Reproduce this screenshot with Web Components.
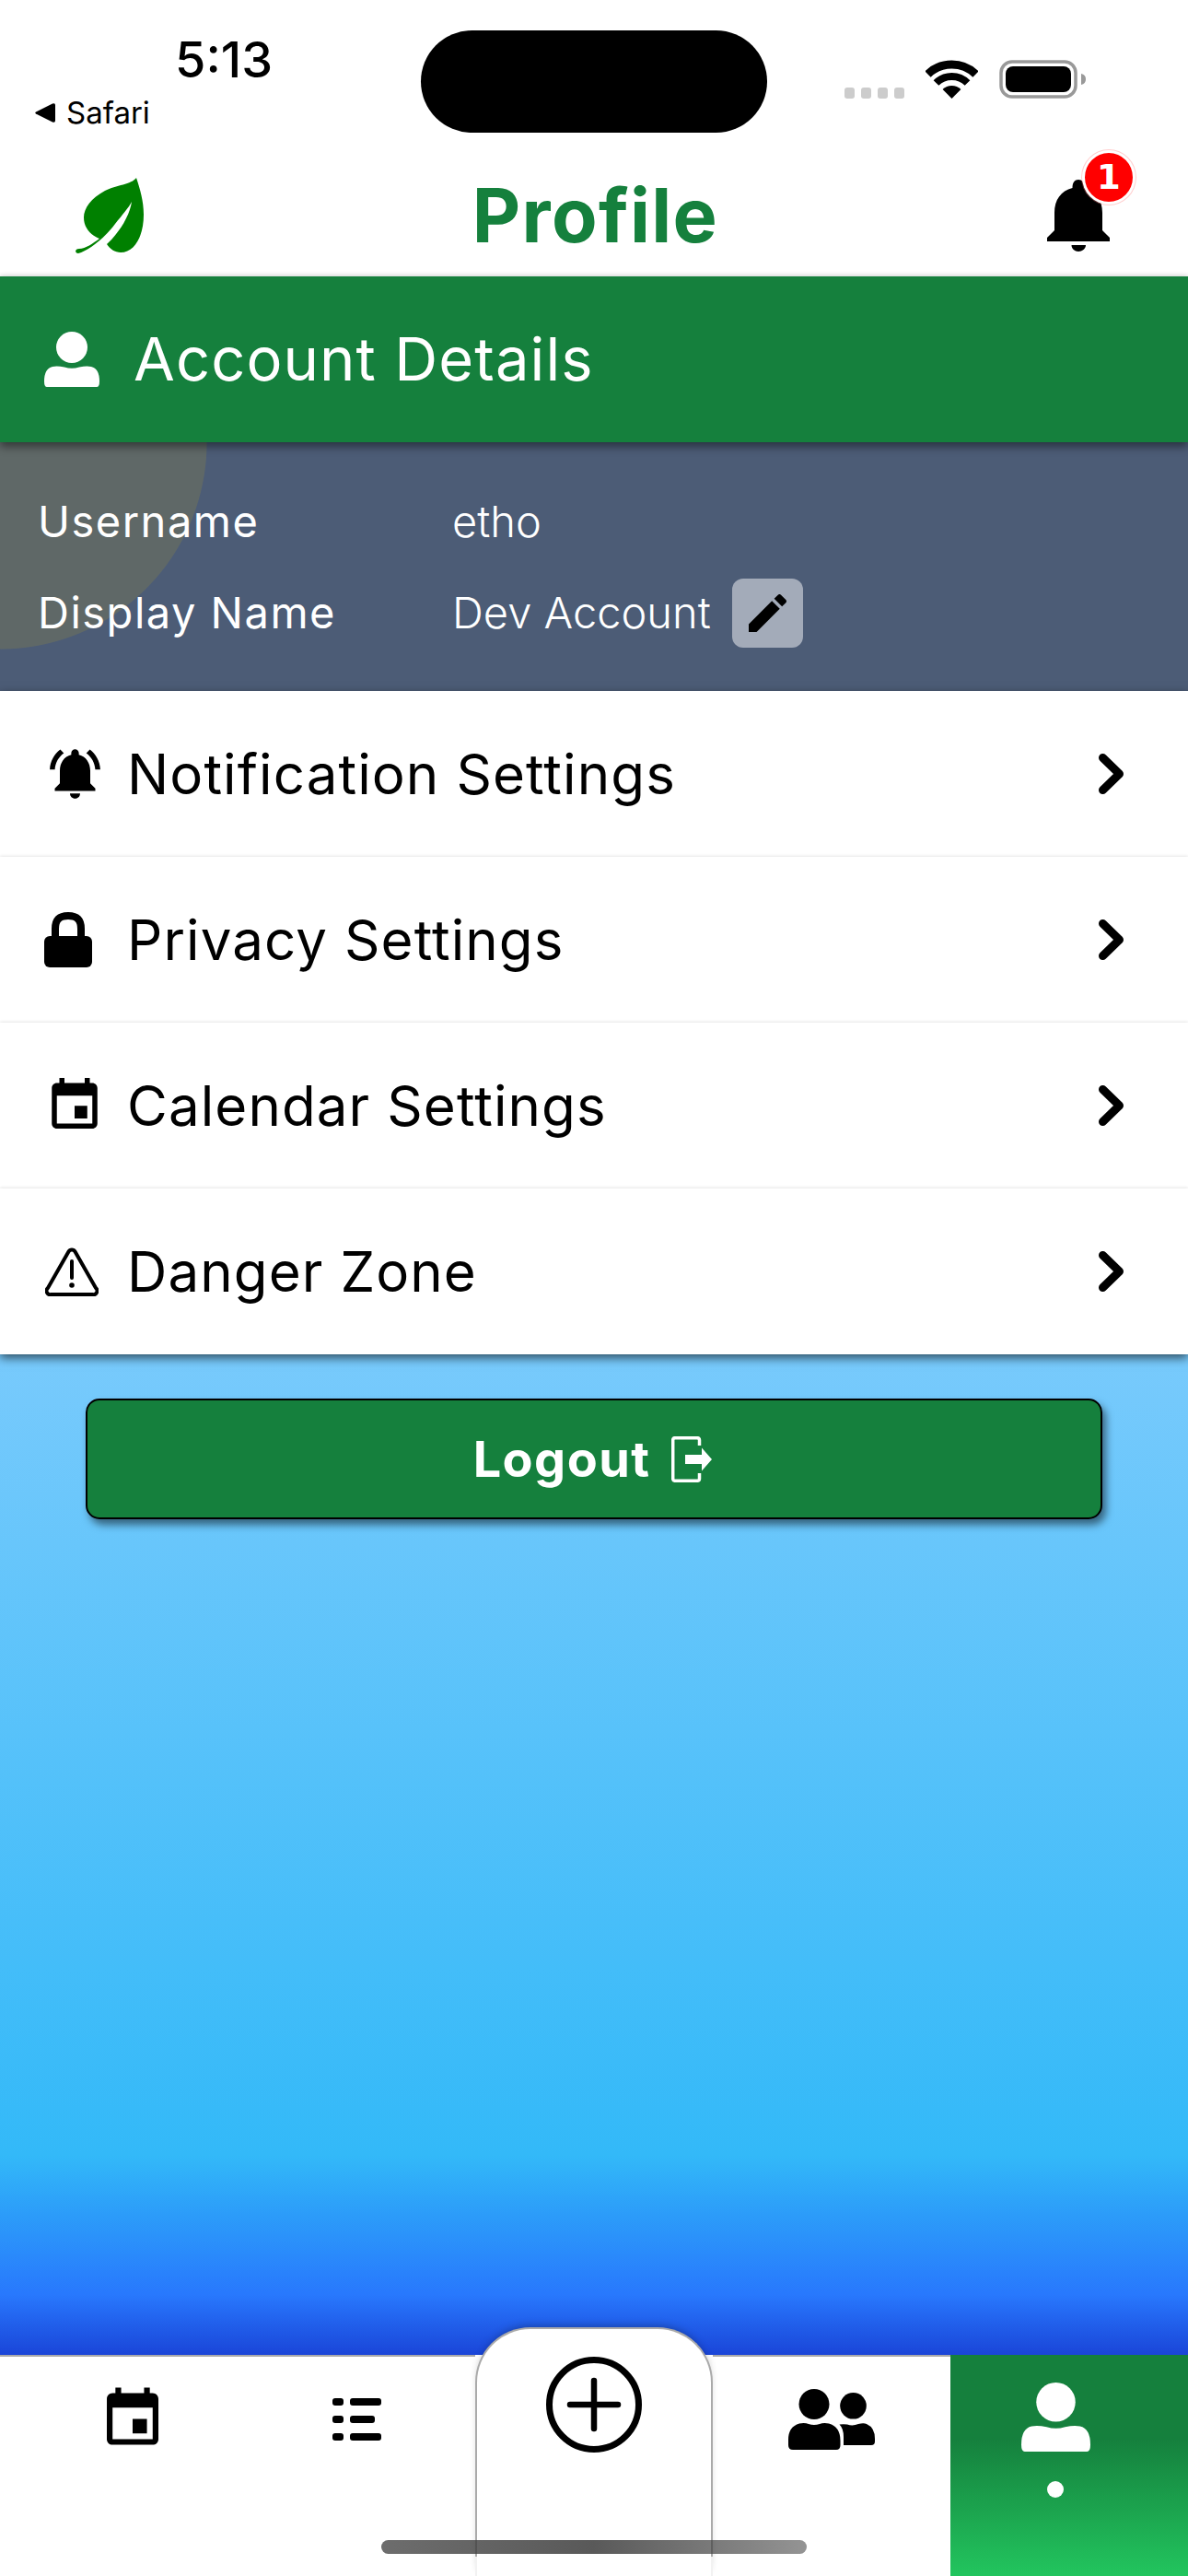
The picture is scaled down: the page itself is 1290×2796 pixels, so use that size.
<!DOCTYPE html>
<html>
<head>
<meta charset="utf-8">
<style>
  html, body { margin: 0; padding: 0; background: #fff; }
  body { font-family: Inter, "Liberation Sans", sans-serif; }
</style>
</head>
<body>
<app-page>
  <status-bar slot="top"></status-bar>
  <top-nav slot="top" heading="Profile" count="1"></top-nav>
  <section-bar slot="top" label="Account Details"></section-bar>
  <account-info slot="top">
    <info-row label="Username" value="etho"></info-row>
    <info-row label="Display Name" value="Dev Account" editable></info-row>
  </account-info>
  <settings-list slot="top">
    <settings-row label="Notification Settings">
      <svg slot="icon" style="margin-left:54px" width="55" height="54" viewBox="2 2.5 20 19.5"><path d="M7.58 4.08L6.15 2.65C3.75 4.48 2.17 7.3 2.03 10.5h2c.15-2.65 1.51-4.97 3.55-6.42zm12.39 6.42h2c-.15-3.2-1.73-6.02-4.12-7.85l-1.42 1.43c2.02 1.45 3.39 3.77 3.54 6.42zM18 11c0-3.07-1.64-5.64-4.5-6.32V4c0-.83-.67-1.5-1.5-1.5s-1.5.67-1.5 1.5v.68C7.63 5.36 6 7.92 6 11v5l-2 2v1h16v-1l-2-2v-5zm-6 11c.14 0 .27-.01.4-.04.65-.14 1.18-.58 1.44-1.18.1-.24.15-.5.15-.78h-4c.01 1.1.9 2 2.01 2z"/></svg>
    </settings-row>
    <settings-row label="Privacy Settings">
      <svg slot="icon" style="margin-left:48px" width="52" height="60" viewBox="0 0 52 60"><rect y="26" width="52" height="34" rx="6"/><path d="M12 28V18C12 7 18 4 26 4s14 3 14 14v10" fill="none" stroke="#000" stroke-width="8"/></svg>
    </settings-row>
    <settings-row label="Calendar Settings">
      <svg slot="icon" style="margin-left:56px;margin-top:-5px" width="50" height="55" viewBox="3 1 18 20"><path d="M17 12h-5v5h5v-5zM16 1v2H8V1H6v2H5c-1.11 0-1.99.9-1.99 2L3 19c0 1.1.89 2 2 2h14c1.1 0 2-.9 2-2V5c0-1.1-.9-2-2-2h-1V1h-2zm3 18H5V8h14v11z"/></svg>
    </settings-row>
    <settings-row label="Danger Zone">
      <svg slot="icon" style="margin-left:49px" width="58" height="53" viewBox="0 0 58 53"><path d="M25.5 4.5a4 4 0 0 1 7 0L55 44a4 4 0 0 1-3.5 7H6.5A4 4 0 0 1 3 44Z" fill="none" stroke="#000" stroke-width="4"/><path d="M29 15V33" stroke="#000" stroke-width="4" stroke-linecap="round"/><circle cx="29" cy="41" r="2.8"/></svg>
    </settings-row>
  </settings-list>
  <logout-button>Logout</logout-button>
  <tab-bar slot="bottom"></tab-bar>
</app-page>

<script>
// page shell: top blocks, gradient area, tab bar
const pageTpl = document.createElement('template');
pageTpl.innerHTML = `
  <style>
    :host { display: flex; flex-direction: column; width: 1290px; height: 2796px; overflow: hidden; position: relative; }
    main {
      flex: 1;
      padding-top: 48px;
      background: linear-gradient(to bottom, #78cafc 0%, #33b9f8 80%, #2c9cf9 86%, #2878fd 94%, #1a45d8 100%);
    }
    .top { display: block; position: relative; z-index: 1; }
  </style>
  <div class="top"><slot name="top"></slot></div>
  <main><slot></slot></main>
  <slot name="bottom"></slot>
`;
class AppPage extends HTMLElement {
  constructor() {
    super();
    this.attachShadow({ mode: 'open' });
    this.shadowRoot.appendChild(pageTpl.content.cloneNode(true));
  }
}
customElements.define('app-page', AppPage);

// fake iOS status bar
const statusTpl = document.createElement('template');
statusTpl.innerHTML = `
  <style>
    :host { display: flex; height: 165px; background: #fff; color: #000; font-family: Inter, sans-serif; }
    .left { width: 457px; }
    .time { margin: 35px 0 0 190px; font-size: 54px; line-height: 60px; font-weight: 500; }
    .back { margin: 7px 0 0 38px; display: flex; align-items: center; gap: 12px; font-size: 33px; line-height: 40px; }
    .island { width: 376px; height: 111px; margin-top: 33px; border-radius: 56px; background: #000; }
    .right { display: flex; align-items: flex-end; height: 42px; margin: 65px 0 0 84px; }
    .dots { display: flex; gap: 7px; margin-right: 23px; }
    .dots i { width: 11px; height: 12px; border-radius: 3px; background: #ccc; }
    .wifi { margin-right: 23px; }
  </style>
  <div class="left">
    <div class="time">5:13</div>
    <div class="back">
      <svg width="22" height="21" viewBox="0 0 22 21"><path d="M1 9.5 19 .5Q22-.5 22 2V19q0 2.500-3 1.500L1 11.500Q-.5 10.500 1 9.500Z"/></svg>
      <span>Safari</span>
    </div>
  </div>
  <div class="island"></div>
  <div class="right">
    <div class="dots"><i></i><i></i><i></i><i></i></div>
    <svg class="wifi" width="57" height="42" viewBox="0 0 57 42">
      <path d="M2.500 15.500A37.500 37.500 0 0 1 54.500 15.500" fill="none" stroke="#000" stroke-width="9"/>
      <path d="M11.500 25A24 24 0 0 1 45.500 25" fill="none" stroke="#000" stroke-width="8"/>
      <path d="M28.500 42 18.600 32.100A14 14 0 0 1 38.400 32.100Z"/>
    </svg>
    <svg width="94" height="42" viewBox="0 0 94 42">
      <rect x="2" y="2" width="81" height="38" rx="12" fill="none" stroke="#999" stroke-width="3.500"/>
      <rect x="7" y="7" width="71" height="28" rx="8"/>
      <path d="M89 15q5 1 5 6t-5 6Z" fill="#999"/>
    </svg>
  </div>
`;
class StatusBar extends HTMLElement {
  constructor() {
    super();
    this.attachShadow({ mode: 'open' });
    this.shadowRoot.appendChild(statusTpl.content.cloneNode(true));
  }
}
customElements.define('status-bar', StatusBar);

// logo, page title, notification bell
const navTpl = document.createElement('template');
navTpl.innerHTML = `
  <style>
    :host { display: flex; align-items: center; justify-content: space-between; box-sizing: border-box; height: 135px; padding: 3px 85px 0 81px; background: #fff; }
    h1 { margin: 0; font: 700 81px/96px Inter, sans-serif; letter-spacing: 1.3px; color: #15803d; }
    .bell { position: relative; width: 68px; height: 78px; }
    .badge {
      position: absolute; left: 38px; top: -32px;
      box-sizing: border-box; width: 58px; height: 59px;
      display: flex; align-items: center; justify-content: center;
      border: 3px solid #fff; border-radius: 50%;
      box-shadow: 0 0 0 1px rgba(255,120,120,.35);
      background: #f00; color: #fff;
      font: 700 37px/1 "DejaVu Sans", sans-serif;
    }
    svg { display: block; }
  </style>
  <svg width="75" height="83" viewBox="0 0 75 83"><path fill="#008000" d="M67 0C62 7 45 8 33 14 18 22 10 33 10 43c0 11 7 19 17 23C20 71 12 77 5 77 0 77 0 82 4 82 15 79 32 66 44 50 52 40 59 32 62 26 60 40 50 58 35 72c3 5 9 9 15 9C66 81 75 62 75 40 75 25 71 12 67 0Z"/></svg>
  <h1></h1>
  <div class="bell">
    <svg width="68" height="78" viewBox="0 0 68 78"><path d="M34 0C30 0 27.500 3 27.500 9 15 12 8 22 8 36V55L0 63V67H68V63L60 55V36C60 22 53 12 40.500 9 40.500 3 38 0 34 0Z"/><path d="M26.500 71H42C42 75 38 78 34 78S26.500 75 26.500 71Z"/></svg>
    <span class="badge"></span>
  </div>
`;
class TopNav extends HTMLElement {
  constructor() {
    super();
    this.attachShadow({ mode: 'open' });
    this.shadowRoot.appendChild(navTpl.content.cloneNode(true));
    this.shadowRoot.querySelector('h1').textContent = this.getAttribute('heading');
    this.shadowRoot.querySelector('.badge').textContent = this.getAttribute('count');
  }
}
customElements.define('top-nav', TopNav);

// green section header
const sectionTpl = document.createElement('template');
sectionTpl.innerHTML = `
  <style>
    :host {
      display: flex; align-items: center; gap: 37px; position: relative; z-index: 2;
      box-sizing: border-box; height: 180px; padding-left: 48px;
      background: #15803d; color: #fff;
      box-shadow: 0 5px 9px rgba(0,0,0,.45), 0 -2px 4px rgba(0,0,0,.08);
      font: 400 65px/80px Inter, sans-serif;
      letter-spacing: 1.1px;
    }
  </style>
  <svg width="60" height="60" viewBox="0 0 60 60" fill="#fff"><circle cx="30" cy="17" r="17"/><path d="M9 38Q14 37 22 38.500 30 41 38 38.500 46 37 51 38 60 40 60 54 60 60 57 60H3Q0 60 0 54 0 40 9 38Z"/></svg>
  <span></span>
`;
class SectionBar extends HTMLElement {
  constructor() {
    super();
    this.attachShadow({ mode: 'open' });
    this.shadowRoot.appendChild(sectionTpl.content.cloneNode(true));
    this.shadowRoot.querySelector('span').textContent = this.getAttribute('label');
  }
}
customElements.define('section-bar', SectionBar);

// slate panel with the quarter circle in its corner
const infoTpl = document.createElement('template');
infoTpl.innerHTML = `
  <style>
    :host {
      display: flex; flex-direction: column; gap: 23px;
      box-sizing: border-box; height: 270px; padding: 48px 0 0 41px;
      background: radial-gradient(circle 225px at 0 0, #5f6867 99.6%, rgba(95,104,103,0) 100%), #4c5c76;
    }
  </style>
  <slot></slot>
`;
class AccountInfo extends HTMLElement {
  constructor() {
    super();
    this.attachShadow({ mode: 'open' });
    this.shadowRoot.appendChild(infoTpl.content.cloneNode(true));
  }
}
customElements.define('account-info', AccountInfo);

const infoRowTpl = document.createElement('template');
infoRowTpl.innerHTML = `
  <style>
    :host { display: grid; grid-template-columns: 450px 1fr; align-items: center; height: 76px; color: #fff; font: 400 47px/56px Inter, sans-serif; }
    .label { letter-spacing: 1.5px; }
    .text { font-weight: 300; }
    .value { display: flex; align-items: center; gap: 23px; }
    button { box-sizing: border-box; width: 77px; height: 75px; padding: 0; display: flex; align-items: center; justify-content: center; border: 0; border-radius: 12px; background: #a3abb9; }
    button[hidden] { display: none; }
  </style>
  <span class="label"></span>
  <div class="value">
    <span class="text"></span>
    <button hidden><svg width="41" height="41" viewBox="3 3 18 18"><path d="M3 17.250V21h3.750L17.810 9.940l-3.750-3.750L3 17.250zM20.710 7.040c.39-.39.39-1.020 0-1.410l-2.340-2.340c-.39-.39-1.020-.39-1.410 0l-1.830 1.830 3.750 3.750 1.830-1.830z"/></svg></button>
  </div>
`;
class InfoRow extends HTMLElement {
  constructor() {
    super();
    this.attachShadow({ mode: 'open' });
    this.shadowRoot.appendChild(infoRowTpl.content.cloneNode(true));
    this.shadowRoot.querySelector('.label').textContent = this.getAttribute('label');
    this.shadowRoot.querySelector('.text').textContent = this.getAttribute('value');
    this.shadowRoot.querySelector('button').hidden = !this.hasAttribute('editable');
  }
}
customElements.define('info-row', InfoRow);

const listTpl = document.createElement('template');
listTpl.innerHTML = `
  <style>
    :host { display: block; background: #fff; box-shadow: 0 4px 10px rgba(0,0,0,.6); }
  </style>
  <slot></slot>
`;
class SettingsList extends HTMLElement {
  constructor() {
    super();
    this.attachShadow({ mode: 'open' });
    this.shadowRoot.appendChild(listTpl.content.cloneNode(true));
  }
}
customElements.define('settings-list', SettingsList);

const rowTpl = document.createElement('template');
rowTpl.innerHTML = `
  <style>
    :host {
      display: grid; grid-template-columns: 138px 1fr 27px; align-items: center; position: relative;
      box-sizing: border-box; height: 180px; padding-right: 70px;
      background: #fff; color: #000;
      font: 400 60px/72px Inter, sans-serif;
      letter-spacing: 1.1px;
    }
    :host(:not(:first-child)) { box-shadow: 0 -1px 3px rgba(0,0,0,.1); }
    ::slotted(svg) { display: block; }
  </style>
  <slot name="icon"></slot>
  <span></span>
  <svg width="27" height="44" viewBox="0 0 27 44"><path d="M4.500 4.500 22.500 22 4.500 39.500" fill="none" stroke="#000" stroke-width="9" stroke-linecap="round" stroke-linejoin="round"/></svg>
`;
class SettingsRow extends HTMLElement {
  constructor() {
    super();
    this.attachShadow({ mode: 'open' });
    this.shadowRoot.appendChild(rowTpl.content.cloneNode(true));
    this.shadowRoot.querySelector('span').textContent = this.getAttribute('label');
  }
}
customElements.define('settings-row', SettingsRow);

const logoutTpl = document.createElement('template');
logoutTpl.innerHTML = `
  <style>
    :host { display: block; margin: 0 93px; }
    button {
      display: flex; align-items: center; justify-content: center; gap: 23px;
      box-sizing: border-box; width: 100%; height: 131px; padding: 0 3px 0 0;
      border: 2px solid #000; border-radius: 15px;
      background: #15803d; color: #fff;
      box-shadow: 4px 6px 8px rgba(0,0,0,.5);
      font: 700 54px/64px Inter, sans-serif;
      letter-spacing: 1.4px;
    }
  </style>
  <button>
    <slot></slot>
    <svg width="44" height="50" viewBox="0 0 44 50"><path d="M30.500 10V4Q30.500 1.700 28 1.700H4Q1.700 1.700 1.700 4V46Q1.700 48.300 4 48.300H28Q30.500 48.300 30.500 46V40" fill="none" stroke="#fff" stroke-width="3.500"/><path d="M15 20H33V12.500L44 25 33 37.500V30H15Z" fill="#fff"/></svg>
  </button>
`;
class LogoutButton extends HTMLElement {
  constructor() {
    super();
    this.attachShadow({ mode: 'open' });
    this.shadowRoot.appendChild(logoutTpl.content.cloneNode(true));
  }
}
customElements.define('logout-button', LogoutButton);

// bottom tabs, the middle one sticks up over the gradient
const tabsTpl = document.createElement('template');
tabsTpl.innerHTML = `
  <style>
    :host { display: grid; grid-template-columns: repeat(5, 1fr); height: 240px; position: relative; background: #fff; }
    .tab { display: flex; flex-direction: column; align-items: center; box-sizing: border-box; border-top: 2px solid #aaa; background: #fff; }
    .cal { padding: 33px 0 0 30px; }
    .list { padding-top: 45px; }
    .users { padding-top: 35px; }
    .add {
      position: relative; margin-top: -30px; padding-top: 30px;
      border: 2px solid #aaa; border-bottom: 0; border-radius: 60px 60px 0 0;
      box-shadow: 0 -5px 10px -4px rgba(0,0,0,.3);
    }
    .add::after { content: ''; position: absolute; left: -2px; right: -2px; bottom: 0; height: 21px; background: rgba(255,255,255,.85); }
    .me {
      border-top: 0; padding: 30px 30px 0 0;
      background: linear-gradient(to bottom, #15803d 0%, #15803d 38%, #22c55e 100%);
    }
    .dot { width: 18px; height: 18px; margin-top: 32px; border-radius: 50%; background: #fff; }
    .home {
      position: absolute; left: 414px; top: 201px; width: 462px; height: 15px; border-radius: 8px;
      background: linear-gradient(to right, rgba(60,60,60,.75) 0%, rgba(60,60,60,.85) 50%, rgba(60,60,60,.55) 100%);
    }
  </style>
  <div class="tab cal"><svg width="56" height="63" viewBox="3 1 18 20"><path d="M17 12h-5v5h5v-5zM16 1v2H8V1H6v2H5c-1.110 0-1.990.9-1.990 2L3 19c0 1.100.89 2 2 2h14c1.100 0 2-.9 2-2V5c0-1.100-.9-2-2-2h-1V1h-2zm3 18H5V8h14v11z"/></svg></div>
  <div class="tab list"><svg width="53" height="46" viewBox="0 0 53 46"><rect width="12" height="8" rx="3"/><rect x="19" width="34" height="8" rx="3"/><rect y="19" width="12" height="8" rx="3"/><rect x="19" y="19" width="27" height="8" rx="3"/><rect y="38" width="12" height="8" rx="3"/><rect x="19" y="38" width="34" height="8" rx="3"/></svg></div>
  <div class="tab add"><svg width="104" height="104" viewBox="0 0 104 104"><circle cx="52" cy="52" r="48.500" fill="none" stroke="#000" stroke-width="7"/><path d="M26 52H78M52 26V78" stroke="#000" stroke-width="6.500" stroke-linecap="round"/></svg></div>
  <div class="tab users"><svg width="94" height="66" viewBox="0 0 94 66"><circle cx="28" cy="16.500" r="16.500"/><path d="M12 37.500Q18 36.500 22 38 28 40 34 38 38 36.500 44 37.500 56.500 41 56.500 56V61Q56.500 66 52 66H5Q0 66 0 61V55Q0 41 12 37.500Z"/><circle cx="70.500" cy="18.300" r="14.300"/><path d="M55.500 38.500Q60 38 64 38.500 70 40.500 76 38 82 36.500 85 38 94 42 94 54V57Q94 61 90 61H60V52Q60 43 55.500 38.500Z"/></svg></div>
  <div class="tab me"><svg width="75" height="75" viewBox="0 0 60 60" fill="#fff"><circle cx="30" cy="17" r="17"/><path d="M9 38Q14 37 22 38.500 30 41 38 38.500 46 37 51 38 60 40 60 54 60 60 57 60H3Q0 60 0 54 0 40 9 38Z"/></svg><span class="dot"></span></div>
  <div class="home"></div>
`;
class TabBar extends HTMLElement {
  constructor() {
    super();
    this.attachShadow({ mode: 'open' });
    this.shadowRoot.appendChild(tabsTpl.content.cloneNode(true));
  }
}
customElements.define('tab-bar', TabBar);
</script>
</body>
</html>
